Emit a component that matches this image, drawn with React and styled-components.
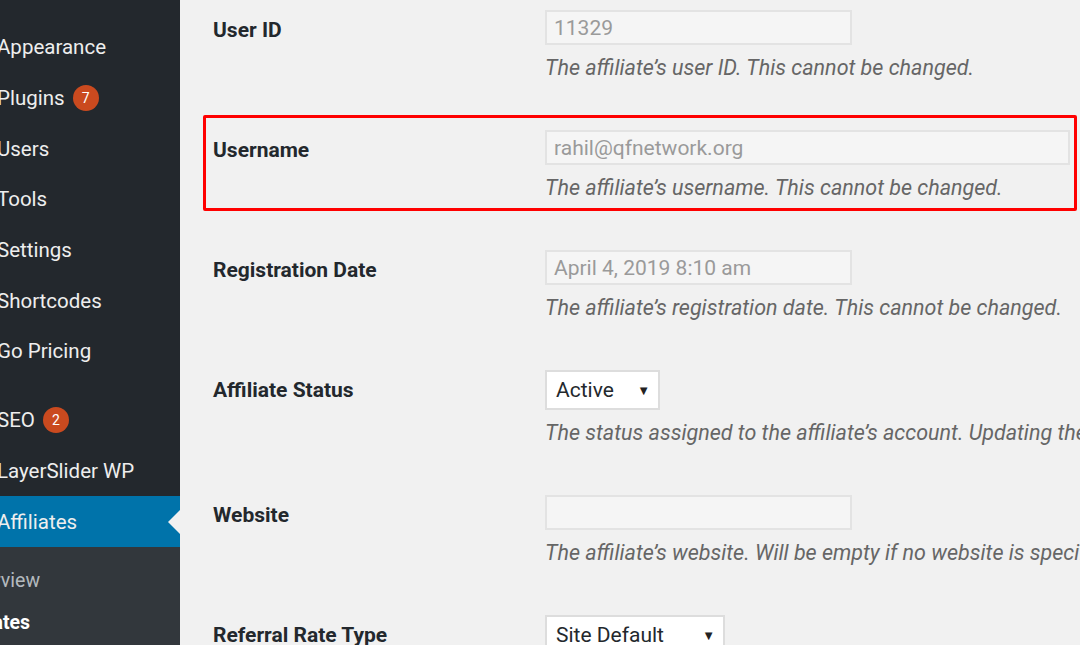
import React from "react";
import styled, { createGlobalStyle } from "styled-components";

const GlobalStyle = createGlobalStyle`
  html, body {
    margin: 0;
    padding: 0;
    height: 100%;
    overflow: hidden;
    background: #f1f1f1;
  }
  body {
    font-family: Roboto, "Liberation Sans", sans-serif;
  }
`;

const menu = [
  { label: "Appearance" },
  { label: "Plugins", badge: "7" },
  { label: "Users" },
  { label: "Tools" },
  { label: "Settings" },
  { label: "Shortcodes" },
  { label: "Go Pricing", separator: true },
  { label: "SEO", badge: "2" },
  { label: "LayerSlider WP" },
  { label: "Affiliates", active: true },
];

const submenu = [
  { label: "Overview" },
  { label: "Affiliates", current: true },
];

const fields = [
  {
    label: "User ID",
    value: "11329",
    desc: "The affiliate\u2019s user ID. This cannot be changed.",
  },
  {
    label: "Username",
    value: "rahil@qfnetwork.org",
    desc: "The affiliate\u2019s username. This cannot be changed.",
    highlight: true,
    wide: true,
  },
  {
    label: "Registration Date",
    value: "April 4, 2019 8:10 am",
    desc: "The affiliate\u2019s registration date. This cannot be changed.",
  },
  {
    label: "Affiliate Status",
    select: "Active",
    selectWidth: 115,
    desc: "The status assigned to the affiliate\u2019s account. Updating the status could result in account changes.",
  },
  {
    label: "Website",
    value: "",
    desc: "The affiliate\u2019s website. Will be empty if no website is specified.",
  },
  {
    label: "Referral Rate Type",
    select: "Site Default",
    selectWidth: 180,
    desc: "",
  },
];

const App = () => {
  return (
    <>
      <GlobalStyle />
      <Layout>
        <Sidebar>
          <Menu>
            {menu.map((item) => (
              <React.Fragment key={item.label}>
                <MenuItem $active={item.active}>
                  <MenuText>{item.label}</MenuText>
                  {item.badge && <Badge>{item.badge}</Badge>}
                  {item.active && <Pointer />}
                </MenuItem>
                {item.separator && <Separator />}
              </React.Fragment>
            ))}
          </Menu>
          <SubMenu>
            {submenu.map((item) => (
              <SubItem key={item.label} $current={item.current}>
                {item.label}
              </SubItem>
            ))}
          </SubMenu>
        </Sidebar>
        <Content>
          <Form>
            {fields.map((f) => (
              <Row key={f.label} $highlight={f.highlight}>
                <Label>{f.label}</Label>
                <Field>
                  {f.select ? (
                    <Select style={{ width: f.selectWidth }}>
                      <span>{f.select}</span>
                      <Arrow>▼</Arrow>
                    </Select>
                  ) : (
                    <Input $wide={f.wide}>{f.value}</Input>
                  )}
                  {f.desc && <Desc>{f.desc}</Desc>}
                </Field>
              </Row>
            ))}
          </Form>
        </Content>
      </Layout>
    </>
  );
};

const Layout = styled.div`
  display: flex;
  width: 1080px;
  height: 645px;
  overflow: hidden;
`;

const Sidebar = styled.div`
  width: 180px;
  flex-shrink: 0;
  background: #23282d;
  display: flex;
  flex-direction: column;
  overflow: hidden;
`;

const Menu = styled.div`
  padding-top: 22px;
`;

const MenuItem = styled.div`
  position: relative;
  display: flex;
  align-items: center;
  height: 50.7px;
  background: ${(p) => (p.$active ? "#0073aa" : "transparent")};
  color: #eeeeee;
  font-size: 20.5px;
  white-space: nowrap;
`;

const MenuText = styled.span`
  margin-left: -3px;
`;

const Badge = styled.span`
  display: inline-flex;
  align-items: center;
  justify-content: center;
  width: 26px;
  height: 26px;
  margin-left: 8px;
  border-radius: 50%;
  background: #ca4a1f;
  color: #fff;
  font-size: 14px;
`;

const Pointer = styled.span`
  position: absolute;
  right: 0;
  top: 50%;
  margin-top: -12px;
  width: 0;
  height: 0;
  border-top: 12px solid transparent;
  border-bottom: 12px solid transparent;
  border-right: 12px solid #f1f1f1;
`;

const Separator = styled.div`
  height: 18px;
`;

const SubMenu = styled.div`
  flex: 1;
  background: #32373c;
  padding-top: 13px;
`;

const SubItem = styled.div`
  height: 42px;
  display: flex;
  align-items: center;
  margin-left: ${(p) => (p.$current ? "-49px" : "-39px")};
  white-space: nowrap;
  font-size: 19.5px;
  color: ${(p) => (p.$current ? "#ffffff" : "rgba(240, 245, 250, 0.7)")};
  font-weight: ${(p) => (p.$current ? 700 : 400)};
`;

const Content = styled.div`
  flex: 1;
  overflow: hidden;
  padding-left: 23px;
`;

const Form = styled.div`
  display: flex;
  flex-direction: column;
  gap: 24px;
  margin-top: -5px;
`;

const Row = styled.div`
  display: flex;
  margin-right: 3px;
  padding: 12px 4px 5px 7px;
  border: 3px solid ${(p) => (p.$highlight ? "#ff0000" : "transparent")};
  border-radius: 2px;
`;

const Label = styled.div`
  width: 332px;
  flex-shrink: 0;
  padding-top: 5px;
  line-height: 30px;
  font-size: 21px;
  font-weight: 700;
  color: #23282d;
`;

const Field = styled.div`
  flex: 1;
  min-width: 0;
  display: flex;
  flex-direction: column;
  align-items: flex-start;
`;

const Input = styled.div`
  box-sizing: border-box;
  width: ${(p) => (p.$wide ? "100%" : "307px")};
  height: 35px;
  padding: 0 7px;
  display: flex;
  align-items: center;
  background: #f5f5f5;
  border: 2px solid #e3e3e3;
  color: #9a9a9a;
  font-size: 21px;
  white-space: nowrap;
`;

const Select = styled.div`
  box-sizing: border-box;
  height: 40px;
  padding: 0 8px 0 9px;
  display: flex;
  align-items: center;
  justify-content: space-between;
  background: #ffffff;
  border: 2px solid #dddddd;
  color: #23282d;
  font-size: 21px;
  white-space: nowrap;
`;

const Arrow = styled.span`
  font-size: 13px;
  color: #222;
`;

const Desc = styled.div`
  margin-top: 8px;
  line-height: 30px;
  font-size: 21.5px;
  font-style: italic;
  color: #666666;
  white-space: nowrap;
`;

export default App;
